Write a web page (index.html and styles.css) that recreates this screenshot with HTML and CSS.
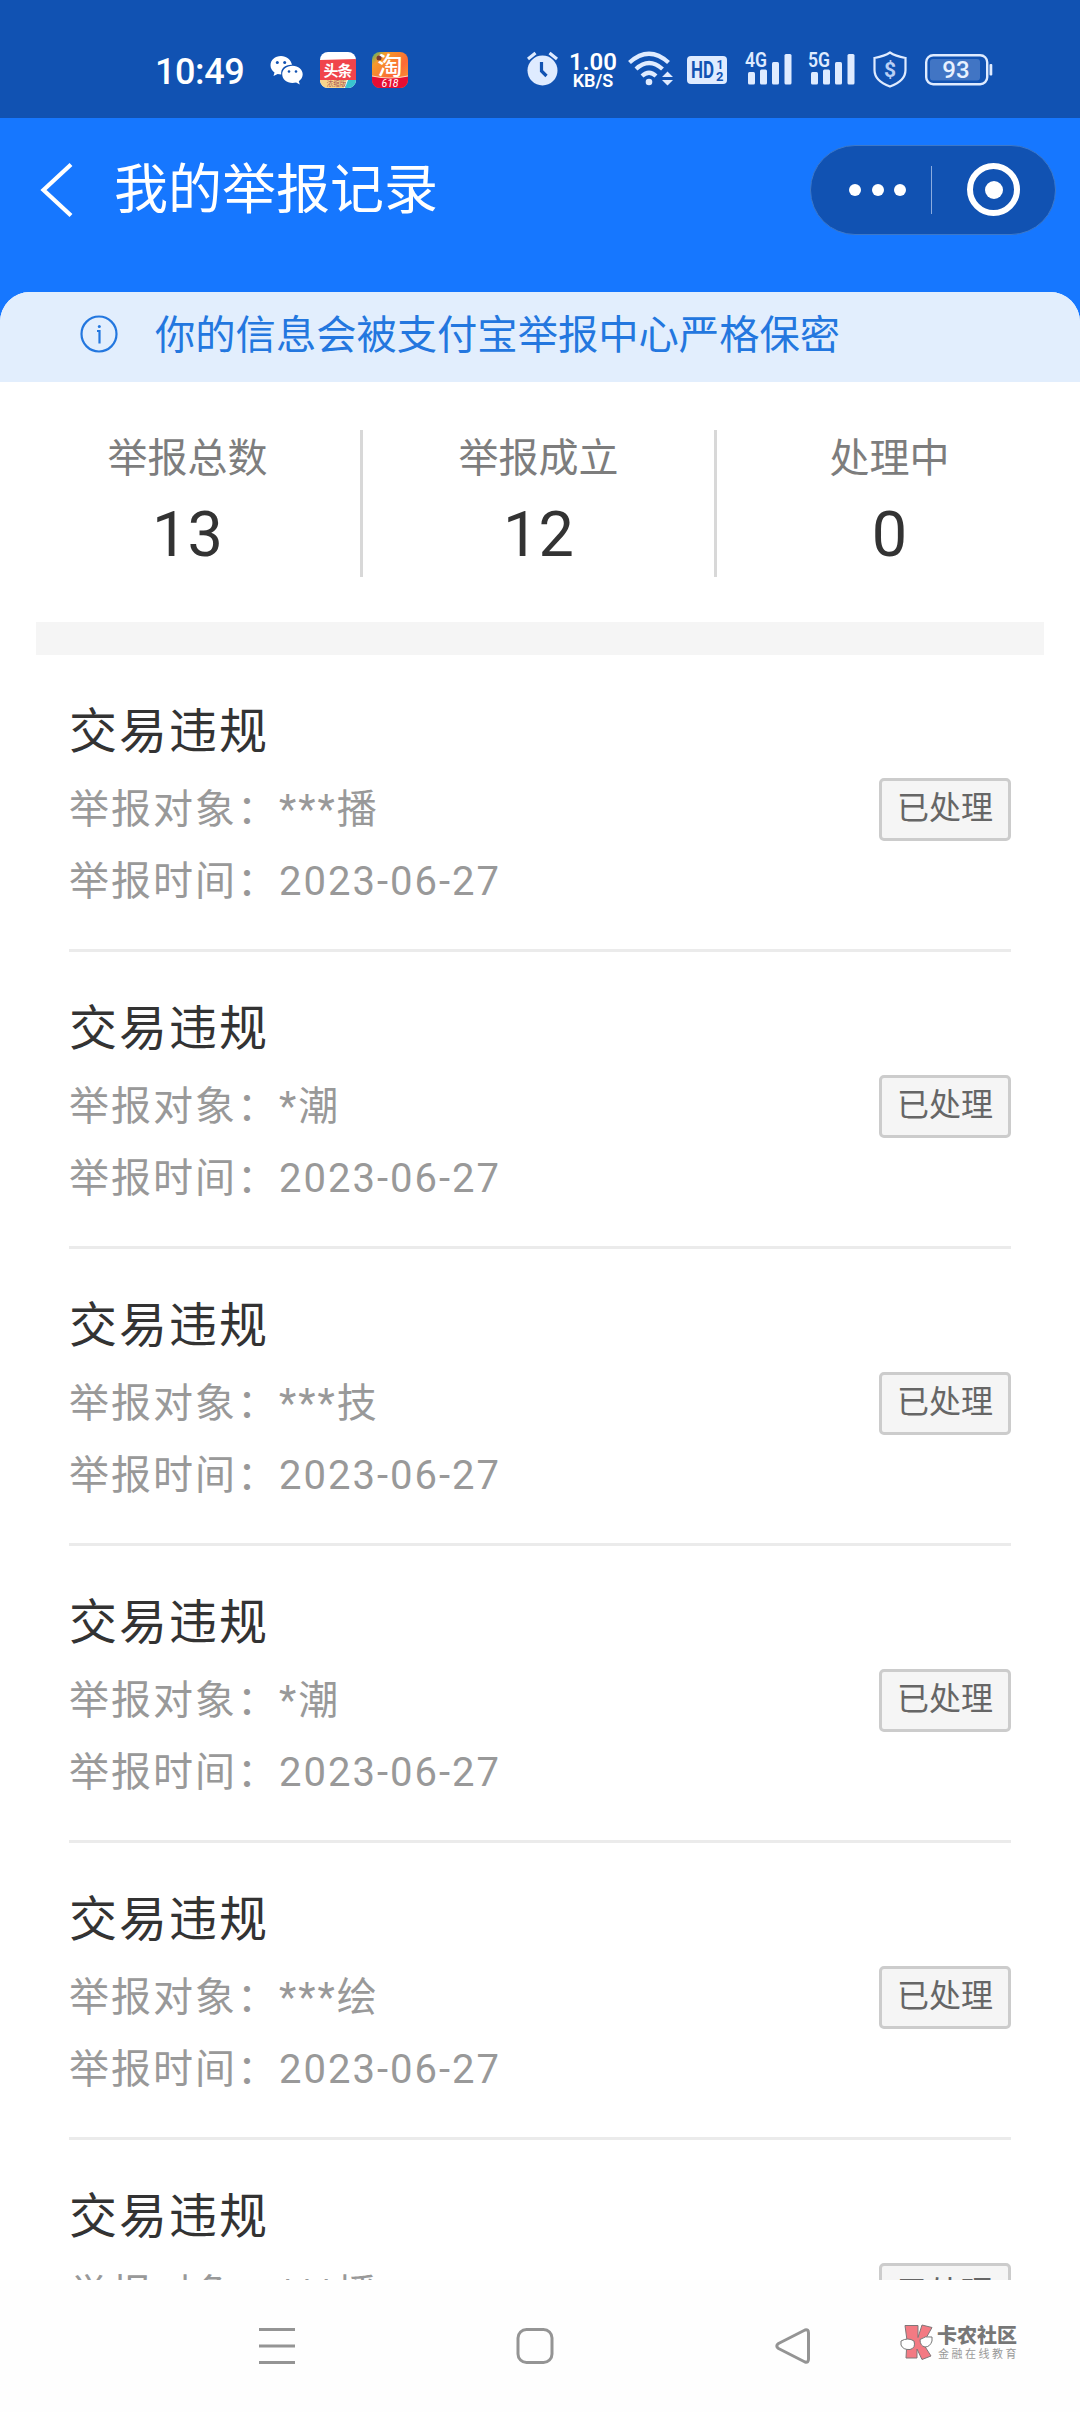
FILE: index.html
```
<!DOCTYPE html>
<html lang="zh-CN">
<head>
<meta charset="utf-8">
<title>我的举报记录</title>
<link rel="stylesheet" href="styles.css">
</head>
<body>
<div class="screen">
  <div class="status">
    <span class="clock">10:49</span>
    <svg class="wechat" width="34" height="30" viewBox="0 0 34 30">
      <path fill="#fff" d="M11 0C5 0 .5 4 .5 9.300c0 3 1.500 5.500 4 7.300L3.500 20l4.200-2c1.100.3 2.200.5 3.500.5C10.500 12 15.500 8.500 22 8.800 21 3.500 16.500 0 11 0z"/>
      <path fill="#fff" d="M22.500 9.800c-6 0-10.300 3.700-10.300 8.500 0 5 4.500 8.700 10.300 8.700 1.300 0 2.500-.2 3.600-.5l3.700 2-1-3.200c2.400-1.700 3.900-4.100 3.900-7 0-4.800-4.400-8.500-10.200-8.500z"/>
      <g fill="#1152b2"><circle cx="7.300" cy="6.500" r="1.500"/><circle cx="14.700" cy="6.500" r="1.500"/><circle cx="19" cy="15.500" r="1.300"/><circle cx="26" cy="15.500" r="1.300"/></g>
    </svg>
    <svg class="toutiao" width="36" height="36" viewBox="0 0 36 36">
      <defs><clipPath id="app"><rect width="36" height="36" rx="8"/></clipPath></defs>
      <g clip-path="url(#app)">
        <rect width="36" height="36" fill="#fff"/>
        <path fill="#f0444b" d="M0 8l36-1v21H0z"/>
        <path fill="#f8d58c" d="M0 28h27l-3 8H0z"/>
        <path fill="#38c4cf" d="M28 28h8v8H25z"/>
        <text class="app-name" x="18" y="23.500" font-size="15" textLength="29">头条</text>
        <text class="app-tag" x="16.500" y="34" font-size="6.500">浓缩版</text>
      </g>
    </svg>
    <svg class="taobao" width="36" height="36" viewBox="0 0 36 36">
      <defs><linearGradient id="tb" x1="0" y1="0" x2="1" y2="1"><stop offset="0" stop-color="#35b878"/><stop offset=".2" stop-color="#f59a2a"/><stop offset=".6" stop-color="#fb6a35"/><stop offset="1" stop-color="#f8a432"/></linearGradient></defs>
      <g clip-path="url(#app)">
        <rect width="36" height="36" fill="url(#tb)"/>
        <path fill="#e60d32" d="M0 24q18 4 36 0v12H0z"/>
        <path fill="none" stroke="#ffd9bb" d="M0 24q18 4 36 0"/>
        <circle cx="7" cy="6" r="2.500" fill="#783b35"/>
      </g>
      <text class="tao" x="18" y="22.500" font-size="25">淘</text>
      <text class="app-sale" x="18" y="35" font-size="10.500">618</text>
    </svg>
    <svg class="alarm" width="34" height="36" viewBox="0 0 34 36">
      <circle cx="16.500" cy="19.500" r="15" fill="#dfebff"/>
      <path d="M2 8l7.500-6M31 8l-7.500-6" stroke="#dfebff" stroke-width="3.200"/>
      <path d="M15.500 11v9l5 5" fill="none" stroke="#1152b2" stroke-width="3.200"/>
    </svg>
    <div class="speed"><b>1.00</b><small>KB/S</small></div>
    <svg class="wifi" width="46" height="36" viewBox="0 0 46 36">
      <g fill="none" stroke="#dfebff" stroke-width="4.300">
        <path d="M1.500 11.500q19.500-17.500 39 0M8 18q13-12 26.500 0M14 25q7-6.500 14 0"/>
      </g>
      <circle cx="21" cy="31" r="3.300" fill="#dfebff"/>
      <path fill="#dfebff" d="M34 26h11l-5.500-5.500zM34 29h11l-5.500 5.500z"/>
    </svg>
    <svg class="hd" width="40" height="28" viewBox="0 0 40 28">
      <rect width="40" height="28" rx="4" fill="#dfebff"/>
      <text class="hd-text" x="4" y="22" font-size="23" textLength="23" lengthAdjust="spacingAndGlyphs">HD</text>
      <text class="hd-text" x="29.500" y="13" font-size="12">1</text><text class="hd-text" x="29" y="25" font-size="13">2</text>
    </svg>
    <svg class="signal" width="48" height="34" viewBox="0 0 48 34">
      <g fill="#dfebff"><rect x="3" y="20" width="7" height="12.500" rx="1.500"/><rect x="15" y="17.500" width="7" height="15" rx="1.500"/><rect x="27" y="10" width="7" height="22.500" rx="1.500"/><rect x="39.500" y="2" width="7" height="30.500" rx="1.500"/></g>
      <text class="net" x="0" y="15" font-size="20" textLength="22" lengthAdjust="spacingAndGlyphs">4G</text>
    </svg>
    <svg class="signal five" width="48" height="34" viewBox="0 0 48 34">
      <g fill="#dfebff"><rect x="3" y="20" width="7" height="12.500" rx="1.500"/><rect x="15" y="17.500" width="7" height="15" rx="1.500"/><rect x="27" y="10" width="7" height="22.500" rx="1.500"/><rect x="39.500" y="2" width="7" height="30.500" rx="1.500"/></g>
      <text class="net" x="0" y="15" font-size="20" textLength="22" lengthAdjust="spacingAndGlyphs">5G</text>
    </svg>
    <svg class="shield" width="34" height="37" viewBox="0 0 34 37">
      <path d="M17 1.500C12 5 7 6 1.500 7v12c0 8 7 13.500 15.500 16.500C25.500 32.500 32.500 27 32.500 19V7C27 6 22 5 17 1.500z" fill="none" stroke="#dfebff" stroke-width="2.200"/>
      <text class="dollar" x="17" y="25.500" font-size="21">$</text>
    </svg>
    <svg class="battery" width="68" height="32" viewBox="0 0 68 32">
      <rect x="1.200" y="1.200" width="61" height="29" rx="7" fill="none" stroke="#dfebff" stroke-width="2.400"/>
      <rect x="5" y="5" width="50" height="21.500" rx="3" fill="#4175c4"/>
      <rect x="64.500" y="10" width="2.800" height="11.500" rx="1" fill="#dfebff"/>
      <text class="level" x="31" y="24" font-size="24">93</text>
    </svg>
  </div>

  <header class="header">
    <svg class="back" width="34" height="54" viewBox="0 0 34 54"><path d="M32 1.500L4.500 27l27.500 25.500" fill="none" stroke="#fff" stroke-width="4.200"/></svg>
    <h1 class="title">我的举报记录</h1>
    <div class="capsule">
      <span class="dots"><i></i><i></i><i></i></span>
      <span class="split"></span>
      <span class="ring"><i></i></span>
    </div>
  </header>

  <main class="sheet">
    <div class="notice">
      <svg class="info" width="38" height="38" viewBox="0 0 38 38"><circle cx="19" cy="19" r="17.500" fill="none" stroke="#2377df" stroke-width="2.200"/><path d="M17 16h2.500v12.500" fill="none" stroke="#2377df" stroke-width="2.200"/><circle cx="19.300" cy="11.500" r="1.500" fill="#2377df"/></svg>
      <span>你的信息会被支付宝举报中心严格保密</span>
    </div>
    <section class="stats">
      <div class="stat"><span>举报总数</span><b>13</b></div>
      <div class="stat"><span>举报成立</span><b>12</b></div>
      <div class="stat"><span>处理中</span><b>0</b></div>
    </section>
    <div class="band"></div>
    <section class="list">
      <article class="item"><div><h2>交易违规</h2><p>举报对象：***播</p><p>举报时间：2023-06-27</p></div><span class="tag">已处理</span></article>
      <article class="item"><div><h2>交易违规</h2><p>举报对象：*潮</p><p>举报时间：2023-06-27</p></div><span class="tag">已处理</span></article>
      <article class="item"><div><h2>交易违规</h2><p>举报对象：***技</p><p>举报时间：2023-06-27</p></div><span class="tag">已处理</span></article>
      <article class="item"><div><h2>交易违规</h2><p>举报对象：*潮</p><p>举报时间：2023-06-27</p></div><span class="tag">已处理</span></article>
      <article class="item"><div><h2>交易违规</h2><p>举报对象：***绘</p><p>举报时间：2023-06-27</p></div><span class="tag">已处理</span></article>
      <article class="item"><div><h2>交易违规</h2><p>举报对象：***播</p></div><span class="tag">已处理</span></article>
    </section>
  </main>

  <nav class="nav">
    <svg class="menu" width="36" height="38" viewBox="0 0 36 38"><path d="M0 2.500h36M0 19h36M0 35.500h36" stroke="#949494" stroke-width="3"/></svg>
    <svg class="home" width="38" height="38" viewBox="0 0 38 38"><rect x="2" y="2.500" width="34" height="33" rx="8.500" fill="none" stroke="#949494" stroke-width="3"/></svg>
    <svg class="prev" width="36" height="38" viewBox="0 0 36 38"><path d="M30 3L3.500 16.500q-3.500 2.500 0 5L30 35q3.500 1 3.500-3V6q0-4-3.500-3z" fill="none" stroke="#949494" stroke-width="3" stroke-linejoin="round"/></svg>
    <div class="brand">
      <svg width="36" height="38" viewBox="0 0 36 38">
        <g fill="#f37a83" stroke="#807779" stroke-width="1"><path d="M6 2.500h13v12L23 2l10 2.500-9 16L32 33l-9 3.500-5-10.500v9H7l1-17.500z"/></g>
        <g fill="#fff" stroke="#777" stroke-width="1"><path d="M2 18q7-4 13 0 2 7-4 8.500-7 .5-9-4.500zM21 16.500q5-4 12-2.500v4q-2 6-7 6-5-1-5-7.500z"/></g>
      </svg>
      <div class="brand-text"><b>卡农社区</b><small>金融在线教育</small></div>
    </div>
  </nav>
</div>
</body>
</html>
```
FILE: styles.css
```
* { box-sizing: border-box; }
body { margin: 0; background: #fff; font-family: Roboto, "Noto Sans CJK SC", sans-serif; }
h1, h2, p { margin: 0; font-weight: 400; }
svg { display: block; flex: none; overflow: visible; }

.screen { width: 1080px; height: 2412px; overflow: hidden; display: flex; flex-direction: column; }

.status { flex: none; height: 118px; background: #1152b2; display: flex; align-items: flex-start; padding: 51px 0 0 155px; color: #fff; }
.clock { width: 115px; font-size: 36px; line-height: 42px; font-weight: 500; letter-spacing: -0.4px; white-space: nowrap; }
.wechat { margin-top: 5px; }
.toutiao { margin: 1px 0 0 16px; }
.taobao { margin: 1px 0 0 16px; }
.alarm { margin: 0 0 0 118px; }
.speed { width: 58px; margin-left: 4px; display: flex; flex-direction: column; align-items: center; font-weight: 600; }
.speed b { font-size: 24px; line-height: 24px; font-weight: 600; margin-top: -1px; }
.speed small { font-size: 18px; line-height: 16px; margin-top: -1px; }
.wifi { margin: 0 0 0 6px; }
.hd { margin: 5px 0 0 13px; }
.signal { margin: 1px 0 0 18px; }
.five { margin-left: 15px; }
.shield { margin: 0 0 0 17px; }
.battery { margin: 3px 0 0 18px; }
.app-name { fill: #fff; font-weight: 700; text-anchor: middle; }
.tao { fill: #fff; font-weight: 500; text-anchor: middle; }
.app-tag { fill: #a55; text-anchor: middle; }
.app-sale { fill: #fff; font-style: italic; text-anchor: middle; }
.hd-text { fill: #1152b2; font-weight: 700; }
.net { fill: #dfebff; font-weight: 600; }
.dollar { fill: #b9cff5; font-weight: 700; text-anchor: middle; }
.level { fill: #e8f1ff; font-weight: 500; text-anchor: middle; }

.header { flex: none; height: 204px; margin-bottom: -30px; background: #1677ff; display: flex; align-items: flex-start; padding: 27px 24px 0 39px; color: #fff; }
.back { margin-top: 18px; }
.title { margin-left: 41px; font-size: 54px; line-height: 92px; }
.capsule { margin-left: auto; width: 246px; height: 90px; border-radius: 45px; border: 1px solid #3d78c8; background: #1152b2; display: flex; align-items: center; }
.dots { margin-left: 38px; display: flex; gap: 10.500px; }
.dots i { width: 12px; height: 12px; border-radius: 50%; background: #fff; }
.split { margin-left: 25px; width: 1px; height: 48px; background: #8bacdf; }
.ring { margin: 0 0 1px 35px; width: 53px; height: 53px; border: 6px solid #fff; border-radius: 50%; display: flex; align-items: center; justify-content: center; }
.ring i { width: 18px; height: 18px; border-radius: 50%; background: #fff; }

.sheet { flex: 1; min-height: 0; overflow: hidden; background: #fff; border-radius: 30px 30px 0 0; }
.notice { height: 90px; background: #e2eefd; color: #2377df; display: flex; align-items: center; padding: 0 0 6px 80px; font-size: 40.3px; }
.notice span { margin: 4px 0 0 37px; line-height: 60px; }
.stats { height: 240px; padding: 48px 18px 0 15px; display: grid; grid-template-columns: 348px 354px 345px; align-items: start; }
.stat { height: 147px; display: flex; flex-direction: column; align-items: center; border-right: 3px solid #d8d8d8; }
.stat:last-child { border-right: 0; }
.stat span { font-size: 40px; line-height: 58px; color: #7d7d7d; }
.stat b { font-size: 63px; line-height: 78px; font-weight: 400; color: #333; margin-top: 8px; }
.band { height: 33px; margin: 0 36px; background: #f5f5f5; }
.list { padding: 0 69px; }
.item { height: 297px; border-bottom: 3px solid #ebebeb; display: flex; justify-content: space-between; }
.item h2 { margin-top: 42px; font-size: 48px; line-height: 70px; letter-spacing: 2px; color: #333; }
.item p { margin-top: 12px; font-size: 40px; line-height: 60px; letter-spacing: 2px; color: #999; }
.item h2 + p { margin-top: 13px; }
.tag { margin-top: 123px; width: 132px; height: 63px; border: 3px solid #ccc; border-radius: 5px; background: #f5f5f5; color: #666; font-size: 32px; line-height: 54px; text-align: center; }

.nav { flex: none; height: 132px; background: #fefefe; display: flex; align-items: flex-start; padding: 47px 0 0 259px; }
.home { margin-left: 221px; }
.prev { margin-left: 221px; }
.brand { margin: -4px 0 0 88px; display: flex; }
.brand-text { margin-left: 2px; display: flex; flex-direction: column; color: #777; white-space: nowrap; }
.brand-text b { font-size: 20px; line-height: 26px; font-weight: 900; }
.brand-text small { font-size: 11px; line-height: 15px; letter-spacing: 2.500px; margin: -2px 0 0 1px; color: #999; }
```
